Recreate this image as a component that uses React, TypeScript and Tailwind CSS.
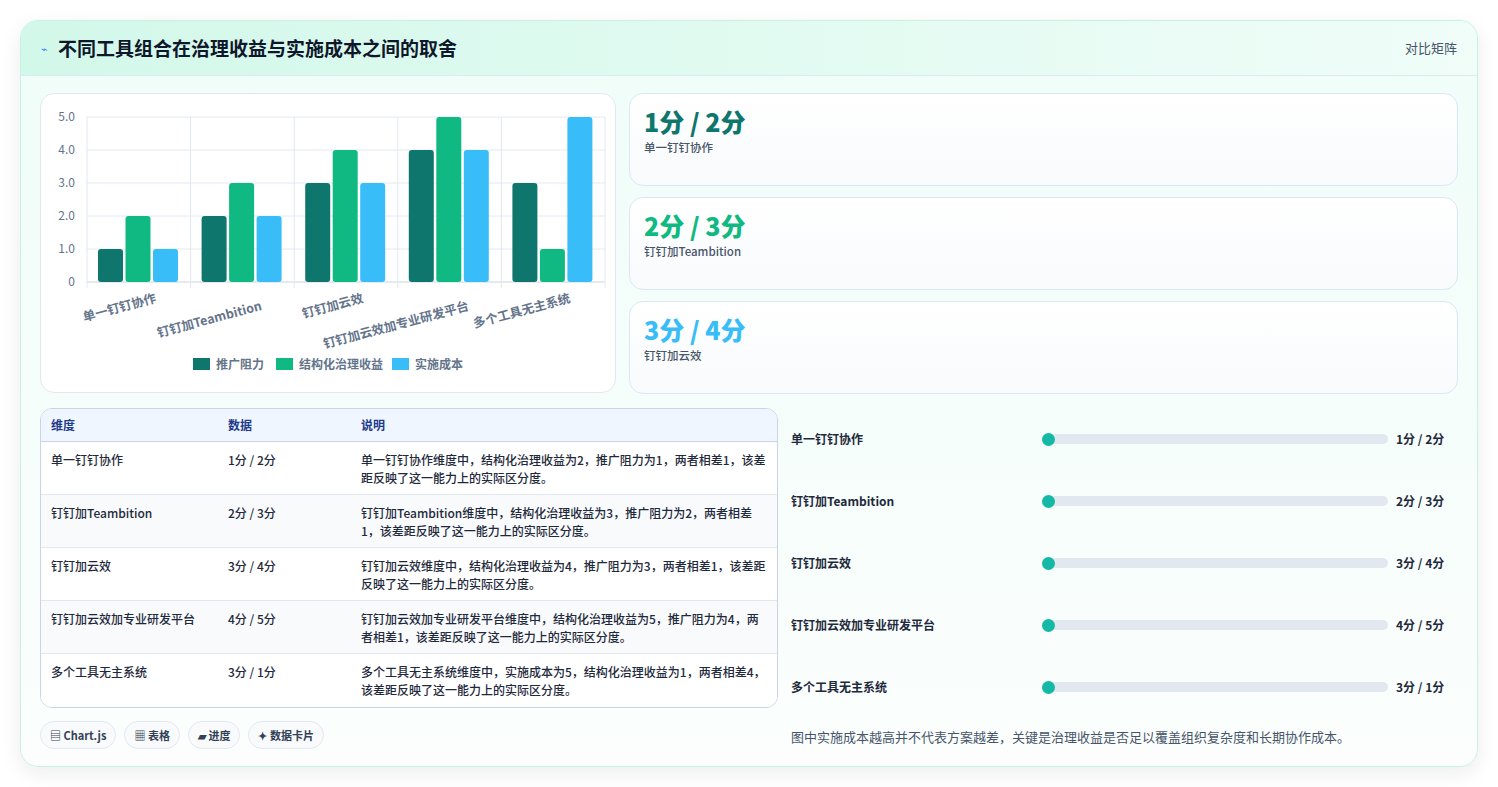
import React from "react";

const rows = [
  { name: "单一钉钉协作", a: 1, b: 2, c: 1, data: "1分 / 2分", desc: "单一钉钉协作维度中，结构化治理收益为2，推广阻力为1，两者相差1，该差距反映了这一能力上的实际区分度。" },
  { name: "钉钉加Teambition", a: 2, b: 3, c: 2, data: "2分 / 3分", desc: "钉钉加Teambition维度中，结构化治理收益为3，推广阻力为2，两者相差1，该差距反映了这一能力上的实际区分度。" },
  { name: "钉钉加云效", a: 3, b: 4, c: 3, data: "3分 / 4分", desc: "钉钉加云效维度中，结构化治理收益为4，推广阻力为3，两者相差1，该差距反映了这一能力上的实际区分度。" },
  { name: "钉钉加云效加专业研发平台", a: 4, b: 5, c: 4, data: "4分 / 5分", desc: "钉钉加云效加专业研发平台维度中，结构化治理收益为5，推广阻力为4，两者相差1，该差距反映了这一能力上的实际区分度。" },
  { name: "多个工具无主系统", a: 3, b: 1, c: 5, data: "3分 / 1分", desc: "多个工具无主系统维度中，实施成本为5，结构化治理收益为1，两者相差4，该差距反映了这一能力上的实际区分度。" },
];

const FONT = { fontFamily: '"Noto Sans CJK SC", "Noto Sans", sans-serif' };

function Chart() {
  const x0 = 46, x1 = 564, y0 = 23, y1 = 188;
  const gw = (x1 - x0) / 5;
  const sy = (v: number) => y1 - (v / 5) * (y1 - y0);
  const colors = ["#0f766e", "#10b981", "#38bdf8"];
  return (
    <svg width="576" height="300" className="block">
      {[0, 1, 2, 3, 4, 5].map((v) => (
        <g key={v}>
          <line x1={x0} x2={x1} y1={sy(v)} y2={sy(v)} stroke={v === 0 ? "#cbd5e1" : "#e2e8f0"} />
          <text x={34} y={sy(v) + 4} textAnchor="end" fontSize="12" fill="#64748b">{v === 0 ? "0" : v.toFixed(1)}</text>
        </g>
      ))}
      {[0, 1, 2, 3, 4, 5].map((i) => (
        <line key={i} x1={x0 + i * gw} x2={x0 + i * gw} y1={y0} y2={y1 + 6} stroke="#e2e8f0" />
      ))}
      {rows.map((r, i) => {
        const gx = x0 + i * gw + 11;
        return (
          <g key={i}>
            {[r.a, r.b, r.c].map((v, j) => (
              <rect key={j} x={gx + j * 27.5} y={sy(v)} width={25} height={y1 - sy(v)} rx={3} fill={colors[j]} />
            ))}
            <text
              x={x0 + i * gw + gw / 2 + 18}
              y={y1 + 20}
              textAnchor="end"
              fontSize="12.5"
              fontWeight="700"
              fill="#64748b"
              transform={`rotate(-15 ${x0 + i * gw + gw / 2 + 18} ${y1 + 20})`}
              dy={i % 2 === 1 ? 8 : 0}
            >
              {r.name}
            </text>
          </g>
        );
      })}
      {[["推广阻力", 152], ["结构化治理收益", 235], ["实施成本", 351]].map(([t, x], j) => (
        <g key={j}>
          <rect x={x as number} y={264} width={17} height={12} fill={colors[j]} />
          <text x={(x as number) + 23} y={275} fontSize="12" fill="#64748b" fontWeight="600">{t}</text>
        </g>
      ))}
    </svg>
  );
}

export default function App() {
  const cardColors = ["text-[#0f766e]", "text-[#10b981]", "text-[#38bdf8]"];
  return (
    <div style={FONT} className="w-[1498px] h-[787px] bg-white pt-[20px] px-[20px]">
      <div className="w-[1458px] h-[747px] rounded-[18px] border border-[#c9f0e4] bg-gradient-to-b from-[#effdf8] to-[#fbfefd] shadow-[0_6px_20px_rgba(15,23,42,0.08)] overflow-hidden">
        <div className="h-[55px] flex items-center justify-between pl-[20px] pr-[20px] bg-gradient-to-r from-[#d2f8ea] to-[#f0fdf8] border-b border-[#d8ecf0]">
          <div className="flex items-center gap-[10px]">
            <span className="text-[#3b82f6] text-[11px]">⌁</span>
            <span className="text-[19px] font-bold text-[#0f172a]">不同工具组合在治理收益与实施成本之间的取舍</span>
          </div>
          <span className="text-[13px] text-[#475569] mr-[0px]">对比矩阵</span>
        </div>
        <div className="px-[19px] pt-[17px]">
          <div className="flex gap-[13px]">
            <div className="w-[576px] h-[300px] bg-white rounded-[14px] border border-[#e2e8f0]">
              <Chart />
            </div>
            <div className="flex-1 flex flex-col gap-[11px]">
              {rows.slice(0, 3).map((r, i) => (
                <div key={i} className="h-[93px] rounded-[14px] border border-[#dbe7f3] bg-gradient-to-b from-white to-[#f8fafc] px-[14px] pt-[9px]">
                  <div className={`text-[25px] font-extrabold leading-[36px] ${cardColors[i]}`}>{r.data}</div>
                  <div className="text-[11.5px] text-[#475569] font-medium">{r.name}</div>
                </div>
              ))}
            </div>
          </div>
          <div className="flex gap-[13px] mt-[14px]">
            <div className="w-[738px]">
              <div className="rounded-[12px] border border-[#cbd5e1] overflow-hidden bg-white">
                <div className="flex h-[33px] items-center bg-[#eff6ff] border-b border-[#cbd5e1] text-[12px] font-semibold text-[#1e3a8a]">
                  <div className="w-[187px] pl-[10px]">维度</div>
                  <div className="w-[133px]">数据</div>
                  <div className="flex-1">说明</div>
                </div>
                {rows.map((r, i) => (
                  <div key={i} className={`flex h-[53px] pt-[9px] text-[12px] font-medium text-[#1e293b] leading-[18px] ${i < 4 ? "border-b border-[#e2e8f0]" : ""} ${i % 2 === 1 ? "bg-[#f8fafc]" : "bg-white"}`}>
                    <div className="w-[187px] pl-[10px]">{r.name}</div>
                    <div className="w-[133px]">{r.data}</div>
                    <div className="flex-1 pr-[10px]">{r.desc}</div>
                  </div>
                ))}
              </div>
              <div className="flex gap-[8px] mt-[13px]">
                {["▤ Chart.js", "▦ 表格", "▰ 进度", "✦ 数据卡片"].map((t) => (
                  <span key={t} className="h-[28px] px-[9px] flex items-center rounded-full border border-[#e2e8f0] bg-[#f8fafc] text-[11px] font-semibold text-[#334155]">{t}</span>
                ))}
              </div>
            </div>
            <div className="flex-1 flex flex-col">
              {rows.map((r, i) => (
                <div key={i} className="h-[62px] flex items-center text-[12px] font-semibold text-[#1e293b]">
                  <div className="w-[251px]">{r.name}</div>
                  <div className="w-[346px] h-[10px] rounded-full bg-[#e2e8f0] relative">
                    <div className="absolute left-0 top-[-1.5px] w-[13px] h-[13px] rounded-full bg-[#14b8a6]" />
                  </div>
                  <div className="ml-[8px] font-bold">{r.data}</div>
                </div>
              ))}
              <div className="mt-[9px] text-[13px] text-[#475569]">图中实施成本越高并不代表方案越差，关键是治理收益是否足以覆盖组织复杂度和长期协作成本。</div>
            </div>
          </div>
        </div>
      </div>
    </div>
  );
}
